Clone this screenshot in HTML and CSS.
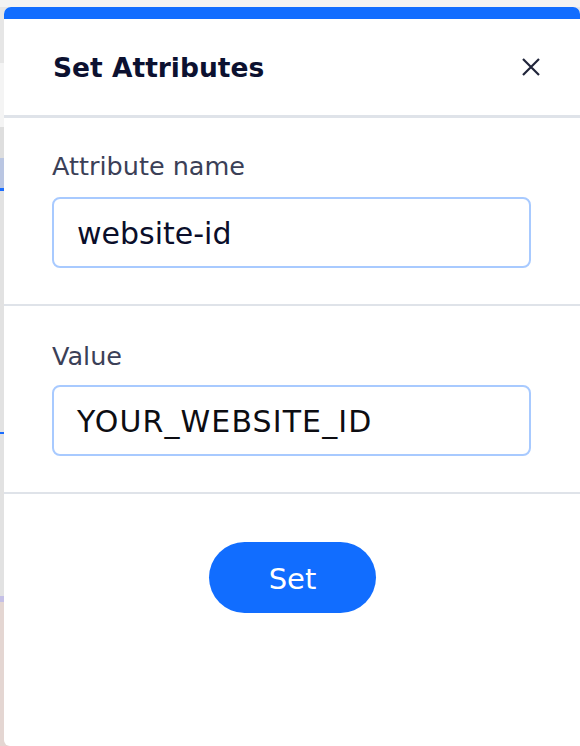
FILE: index.html
```html
<!DOCTYPE html>
<html lang="en">
<head>
<meta charset="utf-8">
<title>Set Attributes</title>
<link rel="stylesheet" href="styles.css">
</head>
<body>
<div class="backdrop">
  <div class="panel">
    <div class="topbar"></div>
    <header class="header">
      <h1 class="title">Set Attributes</h1>
      <button class="close" aria-label="Close">
        <svg width="20" height="20" viewBox="0 0 20 20"><path d="M2 2 L18 18 M18 2 L2 18" stroke="#20243a" stroke-width="2.2" fill="none"/></svg>
      </button>
    </header>
    <section class="field">
      <label class="label">Attribute name</label>
      <div class="input">website-id</div>
    </section>
    <section class="field">
      <label class="label label-value">Value</label>
      <div class="input input-caps">YOUR_WEBSITE_ID</div>
    </section>
    <footer class="footer">
      <button class="btn">Set</button>
    </footer>
  </div>
</div>
</body>
</html>
```
FILE: styles.css
```css
* { box-sizing: border-box; }
html, body { margin: 0; padding: 0; }
body {
  width: 580px;
  height: 746px;
  overflow: hidden;
  font-family: "DejaVu Sans", "Liberation Sans", sans-serif;
  background: linear-gradient(to bottom,
    #e6e6e6 0px, #e6e6e6 63px,
    #f4f4f4 63px, #f4f4f4 127px,
    #dedede 127px, #dedede 158px,
    #bac6e2 158px, #bac6e2 188px,
    #1a6dff 188px, #1a6dff 191px,
    #e2e2e2 191px, #e2e2e2 432px,
    #1a6dff 432px, #1a6dff 434px,
    #e2e2e2 434px, #e2e2e2 596px,
    #c5c0e6 596px, #c5c0e6 602px,
    #e4d6d2 602px, #e4d6d2 746px);
}
.backdrop {
  height: 746px;
  padding: 7px 0 0 4px;
  background: linear-gradient(to bottom, #f3f3f3 0, #f3f3f3 7px, transparent 7px);
}
.panel {
  width: 576px;
  height: 739px;
  background: #fff;
  border-radius: 7px 7px 0 6px;
  overflow: hidden;
  display: flex;
  flex-direction: column;
}
.topbar {
  height: 12px;
  background: #116dff;
}
.header {
  height: 99px;
  display: flex;
  align-items: center;
  justify-content: space-between;
  padding: 0 39px 0 49px;
  border-bottom: 3px solid #dfe3e9;
}
.title {
  margin: 0;
  font-size: 26.5px;
  font-weight: 700;
  color: #0c1130;
}
.close {
  border: 0;
  background: none;
  padding: 0;
  width: 20px;
  height: 20px;
  display: flex;
}
.field {
  display: flex;
  flex-direction: column;
  padding: 30px 49px 36px 48px;
  border-bottom: 2px solid #dfe3e9;
}
.label {
  font-size: 25.5px;
  line-height: 36px;
  color: #3b4057;
  margin-bottom: 13px;
}
.label-value {
  padding-top: 2px;
  margin-bottom: 11px;
}
.input {
  height: 71px;
  border: 2px solid #a8caff;
  border-radius: 8px;
  padding: 2px 0 0 23px;
  display: flex;
  align-items: center;
  font-size: 30px;
  color: #0a0e2a;
}
.input-caps {
  letter-spacing: 1.1px;
  color: #0d0d12;
}
.footer {
  display: flex;
  justify-content: center;
  padding-top: 48px;
}
.btn {
  width: 167px;
  height: 71px;
  border: 0;
  border-radius: 36px;
  background: #116dff;
  color: #fff;
  font-family: "DejaVu Sans", "Liberation Sans", sans-serif;
  font-size: 29px;
  padding: 3px 0 0 1px;
  line-height: 68px;
}
```
